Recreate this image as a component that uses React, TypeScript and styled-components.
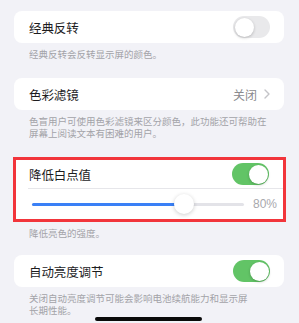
import styled, { createGlobalStyle } from 'styled-components';

const GlobalStyle = createGlobalStyle`
  html, body {
    margin: 0;
    padding: 0;
    background: #f2f2f7;
  }
  body {
    font-family: 'Noto Sans CJK SC', 'Noto Sans', sans-serif;
  }
`;

const Page = styled.main`
  position: relative;
  width: 299px;
  height: 323px;
  padding: 11px 15px 0 14px;
  box-sizing: border-box;
  overflow: hidden;
`;

const Card = styled.section`
  background: #ffffff;
  border-radius: 8px;
`;

const HighlightCard = styled.section`
  background: #ffffff;
  border: 3px solid #f2353b;
  margin: 0 -2px 0 -1px;
`;

const Row = styled.div<{ $height?: number; $inset?: number }>`
  display: flex;
  align-items: center;
  height: ${(p) => p.$height ?? 32}px;
  padding: 0 14px 0 ${(p) => p.$inset ?? 15}px;
`;

const Title = styled.span`
  flex: 1;
  font-size: 12.5px;
  color: #1c1c1e;
  letter-spacing: -0.1px;
`;

const Value = styled.span`
  font-size: 12px;
  color: #8a8a8e;
  margin-right: 7px;
`;

const Footer = styled.p<{ $gap?: number }>`
  margin: 0 0 ${(p) => p.$gap ?? 18}px;
  padding: 5px 15px 0;
  font-size: 9.5px;
  line-height: 12px;
  color: #a3a3a8;
`;

const Switch = styled.div<{ $on?: boolean }>`
  position: relative;
  width: 37px;
  height: 22px;
  border-radius: 11px;
  background: ${(p) => (p.$on ? '#62c466' : '#e9e9eb')};
  flex-shrink: 0;

  &::after {
    content: '';
    position: absolute;
    top: 1.5px;
    left: ${(p) => (p.$on ? '16.5px' : '1.5px')};
    width: 19px;
    height: 19px;
    border-radius: 50%;
    background: #ffffff;
    box-shadow: 0 1px 3px rgba(0, 0, 0, 0.22);
  }
`;

const Divider = styled.div`
  height: 1px;
  margin-left: 12px;
  background: #e6e6ea;
`;

const SliderRow = styled.div`
  display: flex;
  align-items: center;
  height: 30px;
  padding: 0 6px 0 16px;
  gap: 9px;
`;

const Track = styled.div`
  position: relative;
  flex: 1;
  height: 3px;
  border-radius: 2px;
  background: #e3e3e8;
`;

const Fill = styled.div`
  height: 100%;
  border-radius: 2px;
  background: #3a80f6;
`;

const Thumb = styled.div`
  position: absolute;
  top: 50%;
  width: 20px;
  height: 20px;
  margin: -10px 0 0 -10px;
  border-radius: 50%;
  background: #ffffff;
  box-shadow: 0 1px 4px rgba(0, 0, 0, 0.2);
`;

const Percent = styled.span`
  font-family: 'Liberation Sans', Arial, sans-serif;
  font-size: 12px;
  color: #a8a8ad;
`;

const HomeBar = styled.div`
  position: absolute;
  left: 95px;
  bottom: 2px;
  width: 107px;
  height: 4px;
  border-radius: 2px;
  background: #0a0a0a;
`;

function Chevron() {
  return (
    <svg width="6" height="10" viewBox="0 0 6 10" fill="none">
      <path d="M1 1l4 4-4 4" stroke="#c4c4c8" strokeWidth="1.4" strokeLinecap="round" strokeLinejoin="round" />
    </svg>
  );
}

const level = 71.5;

function App() {
  return (
    <>
      <GlobalStyle />
      <Page>
        <Card>
          <Row>
            <Title>经典反转</Title>
            <Switch />
          </Row>
        </Card>
        <Footer>经典反转会反转显示屏的颜色。</Footer>

        <Card>
          <Row>
            <Title>色彩滤镜</Title>
            <Value>关闭</Value>
            <Chevron />
          </Row>
        </Card>
        <Footer>
          色盲用户可使用色彩滤镜来区分颜色，此功能还可帮助在
          <br />
          屏幕上阅读文本有困难的用户。
        </Footer>

        <HighlightCard>
          <Row $height={28} $inset={13}>
            <Title>降低白点值</Title>
            <Switch $on />
          </Row>
          <Divider />
          <SliderRow>
            <Track>
              <Fill style={{ width: `${level}%` }} />
              <Thumb style={{ left: `${level}%` }} />
            </Track>
            <Percent>80%</Percent>
          </SliderRow>
        </HighlightCard>
        <Footer $gap={16}>降低亮色的强度。</Footer>

        <Card>
          <Row>
            <Title>自动亮度调节</Title>
            <Switch $on />
          </Row>
        </Card>
        <Footer>
          关闭自动亮度调节可能会影响电池续航能力和显示屏
          <br />
          长期性能。
        </Footer>
        <HomeBar />
      </Page>
    </>
  );
}

export default App;
